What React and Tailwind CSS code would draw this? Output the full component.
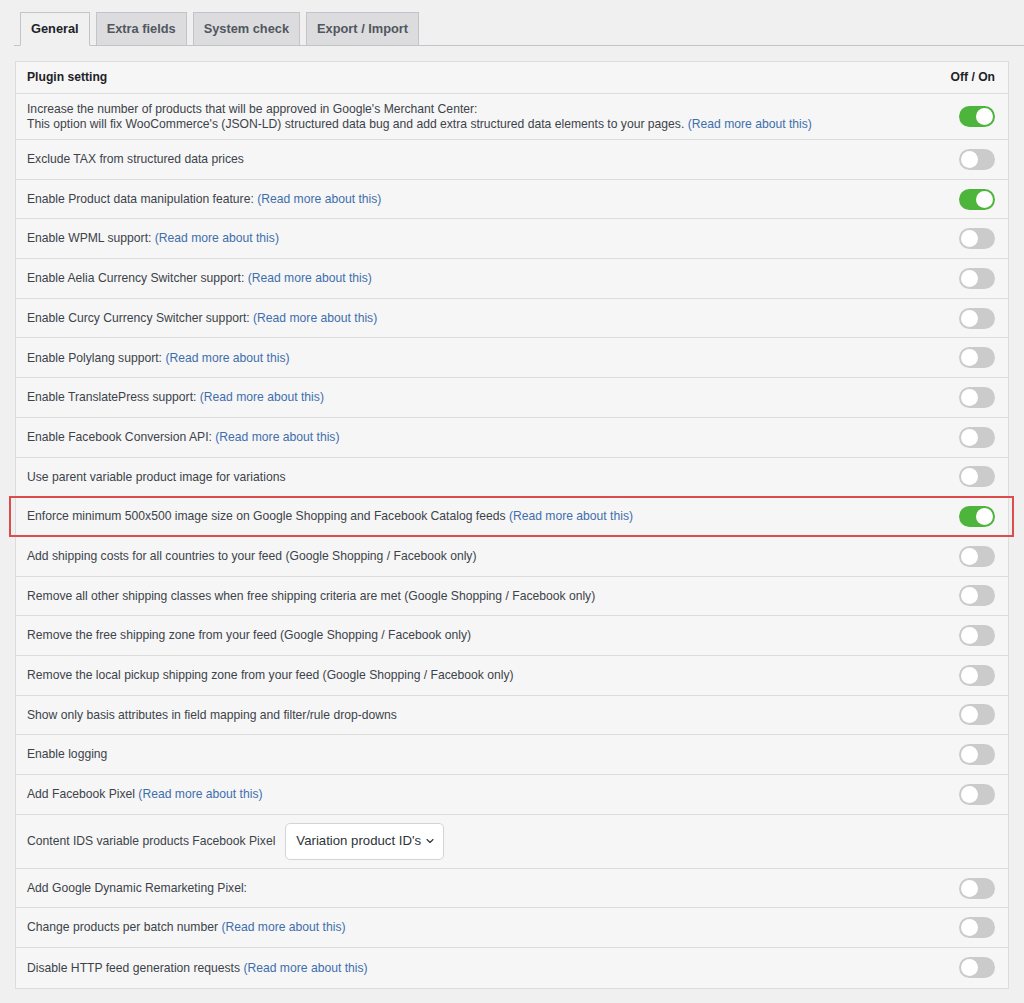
import React from "react";
import { ChevronDown } from "lucide-react";

const READ = "(Read more about this)";

const rows = [
  {
    lines: [
      "Increase the number of products that will be approved in Google's Merchant Center:",
      "This option will fix WooCommerce's (JSON-LD) structured data bug and add extra structured data elements to your pages.",
    ],
    link: true,
    on: true,
    tall: true,
  },
  { text: "Exclude TAX from structured data prices" },
  { text: "Enable Product data manipulation feature:", link: true, on: true },
  { text: "Enable WPML support:", link: true },
  { text: "Enable Aelia Currency Switcher support:", link: true },
  { text: "Enable Curcy Currency Switcher support:", link: true },
  { text: "Enable Polylang support:", link: true },
  { text: "Enable TranslatePress support:", link: true },
  { text: "Enable Facebook Conversion API:", link: true },
  { text: "Use parent variable product image for variations" },
  {
    text: "Enforce minimum 500x500 image size on Google Shopping and Facebook Catalog feeds",
    link: true,
    on: true,
    highlight: true,
  },
  { text: "Add shipping costs for all countries to your feed (Google Shopping / Facebook only)" },
  { text: "Remove all other shipping classes when free shipping criteria are met (Google Shopping / Facebook only)" },
  { text: "Remove the free shipping zone from your feed (Google Shopping / Facebook only)" },
  { text: "Remove the local pickup shipping zone from your feed (Google Shopping / Facebook only)" },
  { text: "Show only basis attributes in field mapping and filter/rule drop-downs" },
  { text: "Enable logging" },
  { text: "Add Facebook Pixel", link: true },
  { select: true },
  { text: "Add Google Dynamic Remarketing Pixel:" },
  { text: "Change products per batch number", link: true },
  { text: "Disable HTTP feed generation requests", link: true },
];

const Toggle = ({ on }) => (
  <div
    className={
      "relative w-[36px] h-[21px] rounded-full " +
      (on ? "bg-[#4db53b]" : "bg-[#cbcbcb]")
    }
  >
    <div
      className={
        "absolute top-[2px] w-[17px] h-[17px] rounded-full bg-white " +
        (on ? "left-[17px]" : "left-[2px]")
      }
    />
  </div>
);

const tabs = ["General", "Extra fields", "System check", "Export / Import"];

export default function App() {
  return (
    <div
      className="min-h-[1003px] bg-[#f0f0f1] text-[#3c434a] text-[12.15px] pt-[12px]"
      style={{ fontFamily: '"Liberation Sans", Arial, sans-serif' }}
    >
      <div className="ml-[14px] flex items-end gap-[6px] pl-[6px] border-b border-[#c3c4c7] h-[34px]">
        {tabs.map((t, i) => (
          <div
            key={t}
            className={
              "h-[34px] px-[10px] flex items-center text-[12.8px] font-bold border border-[#c3c4c7] -mb-px " +
              (i === 0
                ? "bg-[#f0f0f1] border-b-[#f0f0f1] text-[#1d2327]"
                : "bg-[#dcdcde] text-[#50575e]")
            }
          >
            {t}
          </div>
        ))}
      </div>

      <div className="relative ml-[15px] mt-[15px] w-[994px] bg-[#f6f6f6] border border-[#dcdcdc]">
        <div className="h-[32px] flex items-center justify-between pl-[11px] pr-[13px] font-bold text-[#1d2327] border-b border-[#dcdcdc]">
          <span>Plugin setting</span>
          <span>Off / On</span>
        </div>
        {rows.map((r, i) => (
          <div
            key={i}
            className={
              "relative flex items-center justify-between pl-[11px] pr-[13px] box-border " +
              (i < rows.length - 1 ? "border-b border-[#dcdcdc] " : "") +
              (r.tall ? "h-[46px]" : r.select ? "h-[54px]" : "h-[39.7px]")
            }
          >
            {r.select ? (
              <div className="flex items-center gap-[10px]">
                <span>Content IDS variable products Facebook Pixel</span>
                <div className="h-[37px] w-[159px] bg-white border border-[#d4d4d4] rounded-[5px] flex items-center pl-[10px] gap-[3px] text-[13.2px] text-[#2c3338] whitespace-nowrap">
                  <span>Variation product ID's</span>
                  <ChevronDown className="w-[12px] h-[12px]" strokeWidth={2.2} />
                </div>
              </div>
            ) : (
              <div className="leading-[14.5px]">
                {r.lines ? (
                  <>
                    <div>{r.lines[0]}</div>
                    <div>
                      {r.lines[1]} <span className="text-[#3f6eac]">{READ}</span>
                    </div>
                  </>
                ) : (
                  <div>
                    {r.text}
                    {r.link && <span className="text-[#3f6eac]"> {READ}</span>}
                  </div>
                )}
              </div>
            )}
            {!r.select && <Toggle on={r.on} />}
            {r.highlight && (
              <div className="absolute -left-[7px] -right-[6px] -top-[1px] -bottom-[1px] border-2 border-[#dc4c4c] pointer-events-none" />
            )}
          </div>
        ))}
      </div>
    </div>
  );
}
